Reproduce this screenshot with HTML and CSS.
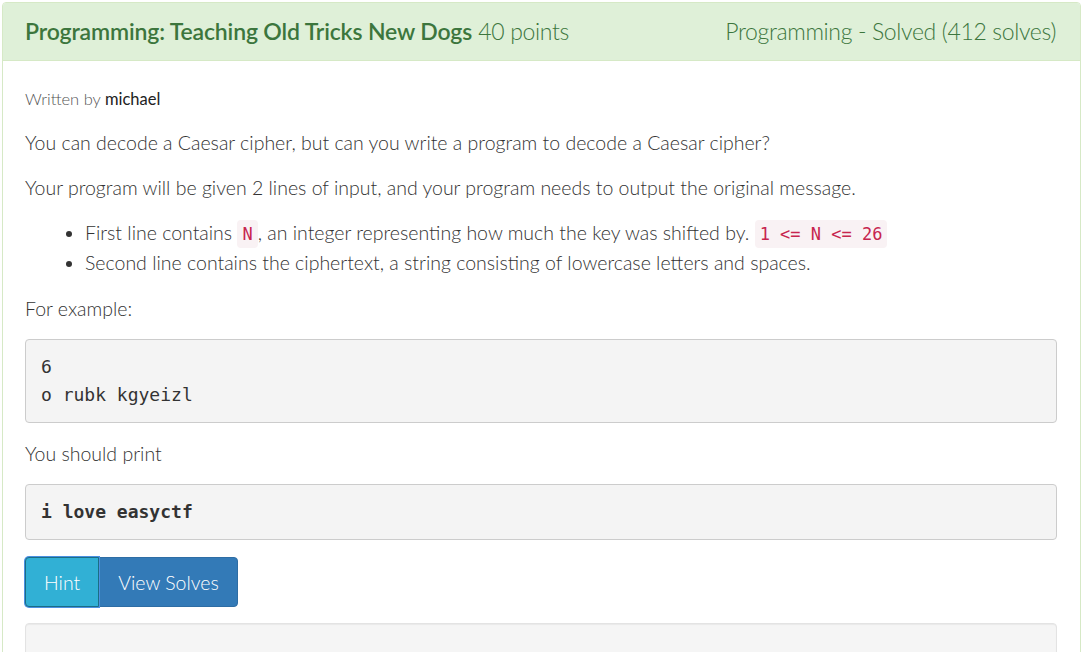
FILE: index.html
```html
<!DOCTYPE html>
<html>
<head>
<meta charset="utf-8">
<link rel="stylesheet" href="styles.css">
</head>
<body>
<div class="panel">
  <div class="panel-heading">
    <div class="title"><span class="name">Programming: Teaching Old Tricks New Dogs</span> <span class="points">40 points</span></div>
    <div class="status">Programming - Solved (412 solves)</div>
  </div>
  <div class="panel-body">
    <p class="author">Written by <span class="who">michael</span></p>
    <p>You can decode a Caesar cipher, but can you write a program to decode a Caesar cipher?</p>
    <p>Your program will be given 2 lines of input, and your program needs to output the original message.</p>
    <ul>
      <li>First line contains <code>N</code>, an integer representing how much the key was shifted by. <code>1 &lt;= N &lt;= 26</code></li>
      <li>Second line contains the ciphertext, a string consisting of lowercase letters and spaces.</li>
    </ul>
    <p>For example:</p>
    <pre>6
o rubk kgyeizl</pre>
    <p>You should print</p>
    <pre class="bold">i love easyctf</pre>
    <div class="btn-group">
      <button class="btn btn-hint">Hint</button><button class="btn btn-solves">View Solves</button>
    </div>
    <div class="well"></div>
  </div>
</div>
</body>
</html>
```

FILE: styles.css
```css
html, body {
  margin: 0;
  padding: 0;
  background: #fff;
  overflow: hidden;
}
body {
  font-family: "Lato", "Open Sans", sans-serif;
  font-weight: 300;
  color: #333;
  padding: 2px 5px 0 2px;
}
.panel {
  border: 1px solid #d6e9c6;
  border-radius: 4px;
  height: 700px;
}
.panel-heading {
  background: #dff0d8;
  color: #3c763d;
  border-bottom: 1px solid #d6e9c6;
  height: 58px;
  padding: 0 24px 2px 22px;
  box-sizing: border-box;
  display: flex;
  align-items: center;
  justify-content: space-between;
  font-size: 23px;
  border-radius: 3px 3px 0 0;
}
.name {
  font-weight: 600;
  letter-spacing: -0.15px;
}
.points, .status {
  font-weight: 300;
  letter-spacing: -0.35px;
}
.panel-body {
  padding: 27px 23px 0 22px;
}
p {
  margin: 0 0 15px;
  font-size: 19.5px;
  line-height: 30px;
}
p.author {
  font-size: 16.5px;
  line-height: 22px;
  margin-bottom: 18px;
  color: #555;
}
.who {
  color: #222;
  font-weight: 400;
}
ul {
  margin: 0 0 16px;
  padding-left: 60px;
  font-size: 19.5px;
  line-height: 30px;
}
code {
  font-family: "DejaVu Sans Mono", monospace;
  font-size: 17px;
  line-height: 1;
  color: #c7254e;
  background: #f9f2f4;
  padding: 4px 5px;
  border-radius: 4px;
}
pre {
  font-family: "DejaVu Sans Mono", monospace;
  font-size: 18px;
  line-height: 28px;
  color: #333;
  background: #f4f4f4;
  border: 1px solid #ccc;
  border-radius: 4px;
  padding: 13px 15px;
  margin: 0 0 16px;
}
pre.bold {
  font-weight: bold;
}
.btn-group {
  display: flex;
  margin-top: 17px;
  margin-bottom: 16px;
}
.btn {
  font-family: "Lato", "Open Sans", sans-serif;
  font-weight: 300;
  font-size: 19.5px;
  color: #fff;
  height: 50px;
  padding: 0 18px;
  border: 1px solid;
  margin: 0;
}
.btn-hint {
  background: #31b0d5;
  border-color: #1b6d85;
  border-radius: 4px 0 0 4px;
  box-shadow: 0 0 0 1px #4a90e2;
  position: relative;
  z-index: 1;
}
.btn-solves {
  background: #337ab7;
  border-color: #2e6da4;
  border-radius: 0 4px 4px 0;
}
.well {
  height: 60px;
  background: #f5f5f5;
  border: 1px solid #e3e3e3;
  border-radius: 4px;
  box-shadow: inset 0 1px 1px rgba(0,0,0,0.05);
}
```
